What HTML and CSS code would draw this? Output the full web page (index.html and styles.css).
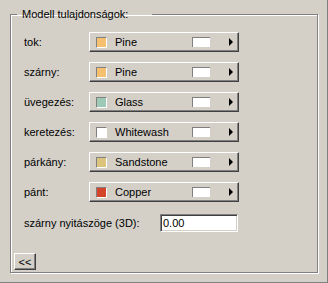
FILE: index.html
```html
<!DOCTYPE html>
<html lang="hu">
<head>
  <meta charset="UTF-8">
  <title>Modell tulajdonságok</title>
  <link rel="stylesheet" href="styles.css">
</head>
<body>

  <div class="window">
    <fieldset class="group">
      <legend>Modell tulajdonságok:</legend>

      <div class="prop-row">
        <span class="prop-label">tok:</span>
        <button class="material">
          <span class="swatch pine"></span>
          <span class="material-name">Pine</span>
          <span class="preview"></span>
          <span class="arrow"></span>
        </button>
      </div>

      <div class="prop-row">
        <span class="prop-label">szárny:</span>
        <button class="material">
          <span class="swatch pine"></span>
          <span class="material-name">Pine</span>
          <span class="preview"></span>
          <span class="arrow"></span>
        </button>
      </div>

      <div class="prop-row">
        <span class="prop-label">üvegezés:</span>
        <button class="material">
          <span class="swatch glass"></span>
          <span class="material-name">Glass</span>
          <span class="preview"></span>
          <span class="arrow"></span>
        </button>
      </div>

      <div class="prop-row">
        <span class="prop-label">keretezés:</span>
        <button class="material">
          <span class="swatch whitewash"></span>
          <span class="material-name">Whitewash</span>
          <span class="preview"></span>
          <span class="arrow"></span>
        </button>
      </div>

      <div class="prop-row">
        <span class="prop-label">párkány:</span>
        <button class="material">
          <span class="swatch sandstone"></span>
          <span class="material-name">Sandstone</span>
          <span class="preview"></span>
          <span class="arrow"></span>
        </button>
      </div>

      <div class="prop-row">
        <span class="prop-label">pánt:</span>
        <button class="material">
          <span class="swatch copper"></span>
          <span class="material-name">Copper</span>
          <span class="preview"></span>
          <span class="arrow"></span>
        </button>
      </div>

      <div class="angle-row">
        <label for="angle">szárny nyitászöge (3D):</label>
        <input type="text" id="angle" value="0.00">
      </div>

      <button class="collapse">&lt;&lt;</button>
    </fieldset>
  </div>

</body>
</html>
```

FILE: styles.css
```css
html, body {
  margin: 0;
  padding: 0;
}

body {
  font-family: "Liberation Sans", Arial, sans-serif;
  font-size: 11px;
  color: #000;
  background: #d4d0c8;
}

.window {
  box-sizing: border-box;
  width: 328px;
  height: 283px;
  border-right: 1px solid #808080;
  border-bottom: 1px solid #808080;
  padding-top: 8px;
}

.group {
  box-sizing: border-box;
  width: 308px;
  height: 265px;
  margin: 0 0 0 10px;
  padding: 11px 0 0 13px;
  border: 1px solid #808080;
  box-shadow: inset 1px 1px 0 #fff, 1px 1px 0 #fff;
}

.group legend {
  margin-left: -7px;
  padding: 0 24px 0 5px;
  line-height: 13px;
}

.prop-row {
  display: flex;
  align-items: center;
  height: 20px;
  margin-bottom: 10px;
}

.prop-label {
  width: 65px;
}

.material {
  box-sizing: border-box;
  display: flex;
  align-items: center;
  width: 150px;
  height: 20px;
  padding: 0 5px 0 6px;
  font: inherit;
  color: #000;
  background: #d4d0c8;
  border: 1px solid;
  border-color: #fff #404040 #404040 #fff;
  box-shadow: inset -1px -1px 0 #808080;
  text-align: left;
  cursor: pointer;
}

.swatch {
  box-sizing: border-box;
  width: 11px;
  height: 11px;
  margin-right: 8px;
  border: 1px solid;
  border-color: #808080 #fff #fff #808080;
}

.pine { background: #f5c070; }
.glass { background: #9ccab6; }
.whitewash { background: #fff; }
.sandstone { background: #dcc47c; }
.copper { background: #d4442a; }

.material-name {
  flex: 1;
}

.preview {
  box-sizing: border-box;
  width: 18px;
  height: 10px;
  margin-right: 19px;
  background: #fff;
  border-top: 1px solid #808080;
  border-left: 1px solid #808080;
}

.arrow {
  width: 0;
  height: 0;
  border-left: 4px solid #000;
  border-top: 4px solid transparent;
  border-bottom: 4px solid transparent;
}

.angle-row {
  display: flex;
  align-items: center;
  margin-top: 12px;
}

.angle-row label {
  width: 136px;
}

.angle-row input {
  box-sizing: border-box;
  width: 78px;
  height: 18px;
  padding: 0 2px;
  font: inherit;
  background: #fff;
  border: 1px solid;
  border-color: #808080 #fff #fff #808080;
  box-shadow: inset 1px 1px 0 #404040, inset -1px -1px 0 #d4d0c8;
  outline: none;
}

.collapse {
  box-sizing: border-box;
  display: block;
  width: 22px;
  height: 17px;
  margin: 21px 0 0 -10px;
  padding: 0;
  font: inherit;
  color: #000;
  background: #d4d0c8;
  border: 1px solid;
  border-color: #fff #404040 #404040 #fff;
  box-shadow: inset -1px -1px 0 #808080;
  cursor: pointer;
}
```
